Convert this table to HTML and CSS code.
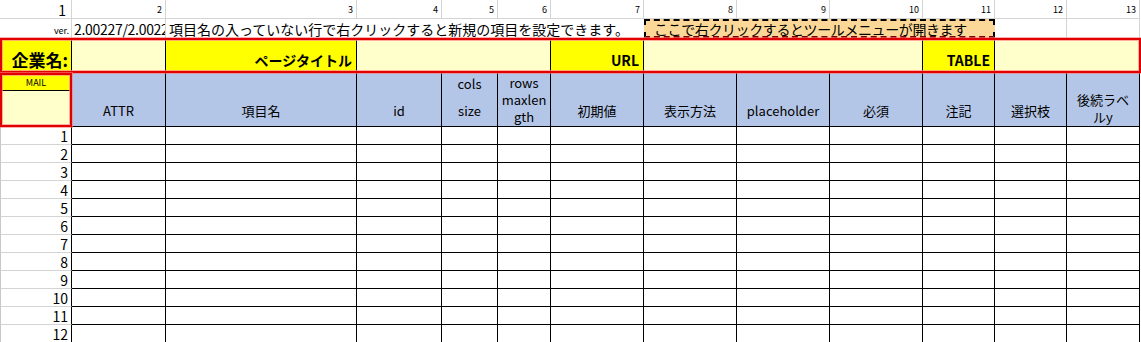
FILE: index.html
```html
<!DOCTYPE html>
<html lang="ja">
<head>
<meta charset="utf-8">
<title>Sheet</title>
<link rel="stylesheet" href="styles.css">
</head>
<body>
<div class="sheet">
  <div class="row r-colnum">
    <div class="c num first">1</div>
    <div class="c num">2</div><div class="c num">3</div><div class="c num">4</div><div class="c num">5</div><div class="c num">6</div><div class="c num">7</div><div class="c num">8</div><div class="c num">9</div><div class="c num">10</div><div class="c num">11</div><div class="c num">12</div><div class="c num">13</div>
  </div>
  <div class="row r-ver">
    <div class="c ver">ver.</div>
    <div class="c verno">2.00227/2.0022</div>
    <div class="c note span5">項目名の入っていない行で右クリックすると新規の項目を設定できます。</div>
    <div class="c menu span4">ここで右クリックするとツールメニューが開きます</div>
    <div class="c"></div>
    <div class="c"></div>
  </div>
  <div class="row r-title framed">
    <div class="c yel big">企業名:</div>
    <div class="c lt"></div>
    <div class="c yel lab">ページタイトル</div>
    <div class="c lt span3"></div>
    <div class="c yel lab">URL</div>
    <div class="c lt span3"></div>
    <div class="c yel lab">TABLE</div>
    <div class="c lt span2 last"></div>
  </div>
  <div class="row r-head">
    <div class="mailbox framed">
      <div class="mail">MAIL</div>
      <div class="mailin"></div>
    </div>
    <div class="h">ATTR</div>
    <div class="h">項目名</div>
    <div class="h">id</div>
    <div class="h two"><span>cols</span><span>size</span></div>
    <div class="h top">rows<br>maxlen<br>gth</div>
    <div class="h">初期値</div>
    <div class="h">表示方法</div>
    <div class="h">placeholder</div>
    <div class="h">必須</div>
    <div class="h">注記</div>
    <div class="h">選択枝</div>
    <div class="h top2">後続ラベ<br>ルy</div>
  </div>
  <div class="row r-data"><div class="rn">1</div><div></div><div></div><div></div><div></div><div></div><div></div><div></div><div></div><div></div><div></div><div></div><div></div></div>
  <div class="row r-data"><div class="rn">2</div><div></div><div></div><div></div><div></div><div></div><div></div><div></div><div></div><div></div><div></div><div></div><div></div></div>
  <div class="row r-data"><div class="rn">3</div><div></div><div></div><div></div><div></div><div></div><div></div><div></div><div></div><div></div><div></div><div></div><div></div></div>
  <div class="row r-data"><div class="rn">4</div><div></div><div></div><div></div><div></div><div></div><div></div><div></div><div></div><div></div><div></div><div></div><div></div></div>
  <div class="row r-data"><div class="rn">5</div><div></div><div></div><div></div><div></div><div></div><div></div><div></div><div></div><div></div><div></div><div></div><div></div></div>
  <div class="row r-data"><div class="rn">6</div><div></div><div></div><div></div><div></div><div></div><div></div><div></div><div></div><div></div><div></div><div></div><div></div></div>
  <div class="row r-data"><div class="rn">7</div><div></div><div></div><div></div><div></div><div></div><div></div><div></div><div></div><div></div><div></div><div></div><div></div></div>
  <div class="row r-data"><div class="rn">8</div><div></div><div></div><div></div><div></div><div></div><div></div><div></div><div></div><div></div><div></div><div></div><div></div></div>
  <div class="row r-data"><div class="rn">9</div><div></div><div></div><div></div><div></div><div></div><div></div><div></div><div></div><div></div><div></div><div></div><div></div></div>
  <div class="row r-data"><div class="rn">10</div><div></div><div></div><div></div><div></div><div></div><div></div><div></div><div></div><div></div><div></div><div></div><div></div></div>
  <div class="row r-data"><div class="rn">11</div><div></div><div></div><div></div><div></div><div></div><div></div><div></div><div></div><div></div><div></div><div></div><div></div></div>
  <div class="row r-data"><div class="rn">12</div><div></div><div></div><div></div><div></div><div></div><div></div><div></div><div></div><div></div><div></div><div></div><div></div></div>
</div>
</body>
</html>
```

FILE: styles.css
```css
* { box-sizing: border-box; }
html, body { margin: 0; padding: 0; background: #fff; }
body {
  font-family: "Noto Sans CJK JP", "Liberation Sans", sans-serif;
  color: #000;
  overflow: hidden;
}
.sheet { display: flex; flex-direction: column; width: 1141px; }
.row {
  display: grid;
  grid-template-columns: 72px 94px 191px 85px 56px 53px 93px 93px 93px 93px 72px 72px 73px;
  position: relative;
}
.c { display: flex; overflow: hidden; white-space: nowrap; }
.span2 { grid-column: span 2; }
.span3 { grid-column: span 3; }
.span4 { grid-column: span 4; }
.span5 { grid-column: span 5; }

/* row 1: column numbers */
.r-colnum { height: 19px; }
.r-colnum .c {
  border-right: 1px solid #d4d4d4;
  border-bottom: 1px solid #d4d4d4;
  justify-content: flex-end;
  align-items: center;
  padding-right: 3px;
  font-size: 9px;
  line-height: 1;
}
.r-colnum .first { font-size: 14px; padding-right: 5px; padding-top: 2px; }

/* row 2: version / notes */
.r-ver { height: 19px; }
.r-ver .c {
  border-right: 1px solid #d4d4d4;
  align-items: center;
  font-size: 14px;
  line-height: 1;
  padding-top: 1px;
}
.r-ver .ver { justify-content: flex-end; font-size: 9px; padding-right: 2px; padding-top: 3px; }
.r-ver .verno { padding-left: 2px; letter-spacing: -0.3px; }
.r-ver .note { padding-left: 3px; border-right: none; overflow: visible; }
.r-ver .menu {
  background: #fcd898;
  border: 2px dashed #000;
  border-bottom-color: #700;
  padding-left: 8px;
  padding-top: 0;
  letter-spacing: -0.4px;
  position: relative;
  z-index: 1;
}

/* row 3: title */
.r-title { height: 35px; }
.r-title .c {
  border-right: 1px solid #000;
  align-items: flex-end;
  justify-content: flex-end;
  padding: 0 4px 6px 0;
  font-weight: bold;
  font-size: 14px;
  line-height: 1;
}
.r-title .last { border-right: none; }
.yel { background: #ffff00; }
.lt { background: #ffffcc; }
.r-title .big { font-size: 17px; padding: 0 3px 5px 0; }

.framed::after {
  content: "";
  position: absolute;
  inset: 0;
  border: 2px solid #e00000;
  box-shadow: 0 0 0 1px rgba(255, 120, 120, 0.6), inset 0 0 0 1px rgba(255, 140, 140, 0.7);
  pointer-events: none;
  z-index: 2;
}

/* rows 4-5: header */
.r-head { height: 54px; }
.mailbox { position: relative; display: flex; flex-direction: column; }
.mail {
  height: 18px;
  background: #ffff00;
  border-bottom: 1px solid #000;
  font-size: 9px;
  display: flex;
  align-items: center;
  justify-content: center;
  padding-top: 2px;
}
.mailin { flex: 1; background: #ffffcc; }
.h {
  background: #b4c6e7;
  border-right: 1px solid #000;
  border-bottom: 1px solid #000;
  font-size: 13px;
  line-height: 18px;
  display: flex;
  flex-direction: column;
  align-items: center;
  justify-content: flex-end;
  padding-bottom: 6px;
  text-align: center;
  overflow: hidden;
  white-space: nowrap;
}
.h.two { justify-content: space-between; padding: 2px 0 6px; }
.h.top { justify-content: flex-start; padding: 1px 0 0; line-height: 17px; }
.h.top2 { justify-content: flex-start; padding: 18px 0 0; line-height: 17px; }

/* data rows */
.r-data { height: 18px; }
.r-data > div {
  border-right: 1px solid #000;
  border-bottom: 1px solid #000;
}
.r-data .rn {
  border-bottom: 1px solid #d4d4d4;
  border-left: 1px solid #c8c8c8;
  display: flex;
  justify-content: flex-end;
  align-items: center;
  padding-right: 3px;
  font-size: 14px;
  line-height: 1;
}
```
